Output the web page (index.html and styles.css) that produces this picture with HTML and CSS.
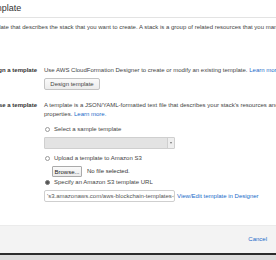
FILE: index.html
```html
<!DOCTYPE html>
<html lang="en">
<head>
    <meta charset="UTF-8">
    <title>Select Template</title>
    <link rel="stylesheet" href="styles.css">
</head>
<body>
    <div class="dialog">
        <!-- Cabeçalho -->
        <div class="dialog-head">
            <h2>Select Template</h2>
        </div>

        <div class="dialog-body">
            <p class="intro">Select the template that describes the stack that you want to create. A stack is a group of related resources that you manage as a single unit.</p>

            <!-- Designer -->
            <div class="row row-design">
                <div class="row-label">Design a template</div>
                <div class="row-content">
                    <div class="line">Use AWS CloudFormation Designer to create or modify an existing template. <a href="#">Learn more.</a></div>
                    <button class="btn btn-design">Design template</button>
                </div>
            </div>

            <!-- Escolher template -->
            <div class="row row-choose">
                <div class="row-label">Choose a template</div>
                <div class="row-content">
                    <div class="line">A template is a JSON/YAML-formatted text file that describes your stack's resources and properties. <a href="#">Learn more.</a></div>

                    <label class="radio radio-sample"><span class="dot"></span>Select a sample template</label>
                    <div class="select"><span class="select-arrow"></span></div>

                    <label class="radio radio-upload"><span class="dot"></span>Upload a template to Amazon S3</label>
                    <div class="file">
                        <button class="btn btn-browse">Browse...</button>
                        <span>No file selected.</span>
                    </div>

                    <label class="radio radio-url"><span class="dot checked"></span>Specify an Amazon S3 template URL</label>
                    <div class="url-row">
                        <div class="url-input"><span>'s3.amazonaws.com/aws-blockchain-templates-us-east-1/ethereum-network.template.json</span></div>
                        <a href="#">View/Edit template in Designer</a>
                    </div>
                </div>
            </div>
        </div>

        <!-- Rodapé -->
        <div class="dialog-foot">
            <a href="#">Cancel</a>
        </div>
    </div>
</body>
</html>
```

FILE: styles.css
```css
body {
    margin: 0;
    width: 276px;
    height: 260px;
    overflow: hidden;
    font-family: "Liberation Sans", Arial, sans-serif;
    font-size: 6px;
    line-height: 9px;
    color: #444;
    background-color: #dcdcdc;
}

a {
    color: #1b6ac9;
    text-decoration: none;
}

.dialog {
    margin-left: -50px;
    width: 326px;
    overflow: hidden;
    background-color: #fff;
    border-bottom: 2px solid #2b2b2b;
}

.dialog-head {
    height: 17px;
    padding-left: 7.5px;
    border-bottom: 1px solid #e3e3e3;
    display: flex;
    align-items: center;
}

h2 {
    margin: 0;
    font-size: 9px;
    font-weight: normal;
    color: #333;
    white-space: nowrap;
}

.dialog-body {
    padding: 5px 0 23px 7.5px;
}

.intro {
    margin: 0;
    white-space: nowrap;
}

/* Linhas com rótulo */
.row {
    display: flex;
    gap: 7px;
}

.row-design {
    margin-top: 33.5px;
}

.row-choose {
    margin-top: 11.5px;
}

.row-label {
    width: 79.5px;
    flex-shrink: 0;
    text-align: right;
    font-weight: bold;
    color: #333;
    white-space: nowrap;
}

.row-content {
    width: 262px;
    flex-shrink: 0;
    display: flex;
    flex-direction: column;
    align-items: flex-start;
}

/* Botões */
.btn {
    font-family: inherit;
    font-size: 6px;
    color: #444;
    background: linear-gradient(#fafafa, #ececec);
    border: 1px solid #c4c4c4;
    border-radius: 2px;
    padding: 0;
}

.btn-design {
    margin-top: 3px;
    width: 56px;
    height: 12px;
}

.btn-browse {
    width: 30px;
    height: 11px;
    color: #222;
    border-color: #aaa;
    border-radius: 1px;
}

/* Rádios */
.radio {
    display: flex;
    align-items: center;
    margin-left: 1px;
}

.dot {
    width: 3px;
    height: 3px;
    border: 1px solid #9a9a9a;
    border-radius: 50%;
    margin-right: 4px;
    background-color: #fff;
}

.dot.checked {
    background-color: #555;
    border-color: #777;
}

.radio-sample {
    margin-top: 5.5px;
}

.radio-upload {
    margin-top: 4.5px;
}

.radio-url {
    margin-top: 0.5px;
}

.select {
    margin-top: 3.5px;
    width: 129px;
    height: 10px;
    background-color: #e3e3e3;
    border: 1px solid #cfcfcf;
    border-radius: 1px;
    display: flex;
    justify-content: flex-end;
}

.select-arrow {
    width: 6px;
    border-left: 1px solid #cfcfcf;
    background-color: #eee;
    position: relative;
}

.select-arrow::after {
    content: "";
    position: absolute;
    left: 2px;
    top: 4px;
    border-left: 1px solid transparent;
    border-right: 1px solid transparent;
    border-top: 2px solid #777;
}

.file {
    margin-top: 3.5px;
    margin-left: 8px;
    display: flex;
    align-items: center;
    gap: 5px;
    color: #333;
}

.url-row {
    margin-top: 3.5px;
    display: flex;
    align-items: center;
    gap: 2px;
}

.url-input {
    width: 127px;
    height: 10px;
    border: 1px solid #cfcfcf;
    border-radius: 2px;
    padding-left: 2px;
    overflow: hidden;
    white-space: nowrap;
    line-height: 10px;
    color: #555;
}

/* Rodapé */
.dialog-foot {
    height: 27px;
    background-color: #f3f3f3;
    border-top: 1px solid #ebebeb;
    display: flex;
    align-items: center;
    justify-content: flex-end;
    padding-right: 9px;
}
```
